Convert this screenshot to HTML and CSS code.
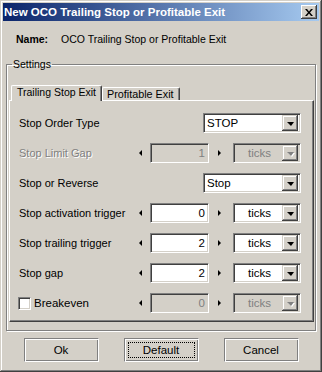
FILE: index.html
```html
<!DOCTYPE html>
<html lang="en">
<head>
    <meta charset="UTF-8">
    <title>New OCO Trailing Stop or Profitable Exit</title>
    <link rel="stylesheet" href="styles.css">
</head>
<body>
    <div class="window">
        <div class="titlebar">
            <span class="title">New OCO Trailing Stop or Profitable Exit</span>
            <span class="close">
                <svg width="8" height="7" viewBox="0 0 8 7">
                    <path d="M0 0h2l2 2.5L6 0h2L5 3.5 8 7H6L4 4.5 2 7H0l3-3.5z" fill="#000"/>
                </svg>
            </span>
        </div>

        <div class="content">
            <div class="name-row">
                <span class="name-label">Name:</span>
                <span>OCO Trailing Stop or Profitable Exit</span>
            </div>

            <fieldset class="settings">
                <legend>Settings</legend>
                <div class="tabs">
                    <div class="tab active">Trailing Stop Exit</div>
                    <div class="tab">Profitable Exit</div>
                </div>
                <div class="panel">
                    <!-- Stop Order Type -->
                    <span class="label">Stop Order Type</span>
                    <div class="combo wide">
                        <span class="combo-text">STOP</span>
                        <span class="drop"></span>
                    </div>

                    <!-- Stop Limit Gap (disabled) -->
                    <span class="label disabled-text">Stop Limit Gap</span>
                    <div class="spin-group disabled">
                        <span class="arrow left"></span>
                        <span class="field num">1</span>
                        <span class="arrow right"></span>
                        <div class="combo unit">
                            <span class="combo-text center">ticks</span>
                            <span class="drop"></span>
                        </div>
                    </div>

                    <!-- Stop or Reverse -->
                    <span class="label">Stop or Reverse</span>
                    <div class="combo wide">
                        <span class="combo-text">Stop</span>
                        <span class="drop"></span>
                    </div>

                    <span class="label">Stop activation trigger</span>
                    <div class="spin-group">
                        <span class="arrow left"></span>
                        <span class="field num">0</span>
                        <span class="arrow right"></span>
                        <div class="combo unit">
                            <span class="combo-text center">ticks</span>
                            <span class="drop"></span>
                        </div>
                    </div>

                    <span class="label">Stop trailing trigger</span>
                    <div class="spin-group">
                        <span class="arrow left"></span>
                        <span class="field num">2</span>
                        <span class="arrow right"></span>
                        <div class="combo unit">
                            <span class="combo-text center">ticks</span>
                            <span class="drop"></span>
                        </div>
                    </div>

                    <span class="label">Stop gap</span>
                    <div class="spin-group">
                        <span class="arrow left"></span>
                        <span class="field num">2</span>
                        <span class="arrow right"></span>
                        <div class="combo unit">
                            <span class="combo-text center">ticks</span>
                            <span class="drop"></span>
                        </div>
                    </div>

                    <!-- Breakeven: checkbox enabled, spin disabled -->
                    <label class="check-label">
                        <span class="checkbox"></span>
                        <span>Breakeven</span>
                    </label>
                    <div class="spin-group disabled">
                        <span class="arrow left"></span>
                        <span class="field num">0</span>
                        <span class="arrow right"></span>
                        <div class="combo unit">
                            <span class="combo-text center">ticks</span>
                            <span class="drop"></span>
                        </div>
                    </div>
                </div>
            </fieldset>

            <div class="buttons">
                <button class="btn">Ok</button>
                <button class="btn focused"><span class="focus-ring">Default</span></button>
                <button class="btn">Cancel</button>
            </div>
        </div>
    </div>
</body>
</html>
```

FILE: styles.css
```css
/* General Styles */
body {
    margin: 0;
    font-family: 'Liberation Sans', Arial, sans-serif;
    font-size: 11px;
    color: #000;
    background: #d4d0c8;
}
.window {
    width: 322px;
    height: 372px;
    box-sizing: border-box;
    padding: 3px;
    background: #d4d0c8;
    box-shadow: inset -1px -1px #404040, inset 1px 1px #d4d0c8,
                inset -2px -2px #808080, inset 2px 2px #fff;
    display: flex;
    flex-direction: column;
}

/* Title bar */
.titlebar {
    height: 18px;
    display: flex;
    align-items: center;
    justify-content: space-between;
    padding: 0 2px 0 1px;
    background: linear-gradient(to right, #0a246a, #a6caf0);
}
.title {
    color: #fff;
    font-weight: bold;
    font-size: 11.5px;
    white-space: nowrap;
}
.close {
    width: 16px;
    height: 14px;
    box-sizing: border-box;
    display: flex;
    align-items: center;
    justify-content: center;
    background: #d4d0c8;
    box-shadow: inset -1px -1px #404040, inset 1px 1px #fff,
                inset -2px -2px #808080;
}

/* Content */
.content {
    flex: 1;
    display: flex;
    flex-direction: column;
    padding: 0 3px;
}
.name-row {
    display: flex;
    font-size: 10.5px;
    line-height: 14px;
    margin-top: 11px;
    padding-left: 10px;
    white-space: nowrap;
}
.name-label {
    font-weight: bold;
    width: 45px;
}

/* Settings group */
.settings {
    margin: 12px 0 0 0;
    padding: 14px 1px 8px 2px;
    border: 1px solid #808080;
    box-shadow: inset 1px 1px #fff, 1px 1px #fff;
    min-width: 0;
}
.settings legend {
    padding: 0 1px;
    margin-left: 3px;
    font-size: 10.5px;
    line-height: 13px;
}

/* Tabs */
.tabs {
    display: flex;
    align-items: flex-end;
    padding-left: 2px;
    height: 15px;
    position: relative;
    z-index: 1;
}
.tab {
    flex-shrink: 0;
    width: 78px;
    height: 13px;
    box-sizing: border-box;
    padding-left: 4px;
    overflow: hidden;
    font-size: 10.8px;
    line-height: 13px;
    white-space: nowrap;
    border-top: 1px solid #fff;
    border-left: 1px solid #fff;
    border-right: 1px solid #404040;
    box-shadow: inset -1px 0 #808080;
    background: #d4d0c8;
    border-radius: 2px 2px 0 0;
}
.tab.active {
    width: 91px;
    height: 16px;
    margin-bottom: -1px;
    padding-left: 5px;
    font-size: 10.5px;
    line-height: 12px;
}

/* Tab page: label column + control column */
.panel {
    display: grid;
    grid-template-columns: 1fr 170px;
    grid-auto-rows: 20px;
    row-gap: 10px;
    align-items: center;
    padding: 12px 12px 8px 9px;
    border: 1px solid;
    border-color: #fff #404040 #404040 #fff;
    box-shadow: inset -1px -1px #808080;
}
.label {
    font-size: 11px;
    white-space: nowrap;
}
.disabled-text {
    color: #808080;
    text-shadow: 1px 1px #fff;
}
.disabled .field,
.disabled .combo {
    background: #d4d0c8;
    color: #808080;
}
.disabled .drop::after {
    border-top-color: #808080;
    filter: drop-shadow(1px 1px 0 #fff);
}

/* Sunken controls */
.field,
.combo {
    height: 20px;
    box-sizing: border-box;
    border: 1px solid;
    border-color: #808080 #fff #fff #808080;
    box-shadow: inset 1px 1px #404040, inset -1px -1px #d4d0c8;
    background: #fff;
}
.combo {
    display: flex;
    align-items: center;
    padding: 2px;
}
.wide {
    width: 98px;
    justify-self: end;
}
.unit {
    width: 68px;
}
.combo-text {
    flex: 1;
    padding-left: 1px;
    font-size: 11.5px;
    line-height: 16px;
}
.combo-text.center {
    text-align: center;
}
.drop {
    flex-shrink: 0;
    width: 16px;
    height: 16px;
    box-sizing: border-box;
    display: flex;
    align-items: center;
    justify-content: center;
    background: #d4d0c8;
    box-shadow: inset -1px -1px #404040, inset 1px 1px #d4d0c8,
                inset -2px -2px #808080, inset 2px 2px #fff;
}
.drop::after {
    content: "";
    border-top: 4px solid #000;
    border-left: 4px solid transparent;
    border-right: 3px solid transparent;
    margin-top: 1px;
}

/* Spin boxes */
.spin-group {
    display: flex;
    align-items: center;
}
.arrow {
    flex-shrink: 0;
    width: 19px;
    height: 20px;
    display: flex;
    align-items: center;
    justify-content: center;
}
.arrow::after {
    content: "";
    border-top: 3px solid transparent;
    border-bottom: 3px solid transparent;
}
.arrow.left::after {
    border-right: 3px solid #000;
}
.arrow.right::after {
    border-left: 3px solid #000;
    margin-left: 1px;
}
.field.num {
    flex-shrink: 0;
    width: 59px;
    text-align: right;
    padding-right: 3px;
    font-size: 11.5px;
    line-height: 18px;
}
.spin-group .combo {
    flex-shrink: 0;
    margin-left: 5px;
}

/* Checkbox */
.check-label {
    display: flex;
    align-items: center;
    gap: 3px;
    font-size: 11.5px;
    margin-left: -1px;
}
.checkbox {
    width: 13px;
    height: 13px;
    box-sizing: border-box;
    border: 1px solid;
    border-color: #808080 #fff #fff #808080;
    box-shadow: inset 1px 1px #404040, inset -1px -1px #d4d0c8;
    background: #fff;
}

/* Buttons */
.buttons {
    display: flex;
    justify-content: center;
    gap: 25px;
    margin-top: 7px;
}
.btn {
    width: 75px;
    height: 24px;
    font-family: inherit;
    font-size: 11.5px;
    background: #d4d0c8;
    border: 1px solid;
    border-color: #808080 #fff #fff #808080;
    box-shadow: inset 1px 1px #fff, inset -1px -1px #808080;
    padding: 0;
    color: #000;
}
.btn.focused {
    padding: 3px;
}
.focus-ring {
    display: flex;
    align-items: center;
    justify-content: center;
    height: 100%;
    box-sizing: border-box;
    border: 1px dotted #000;
}
```
